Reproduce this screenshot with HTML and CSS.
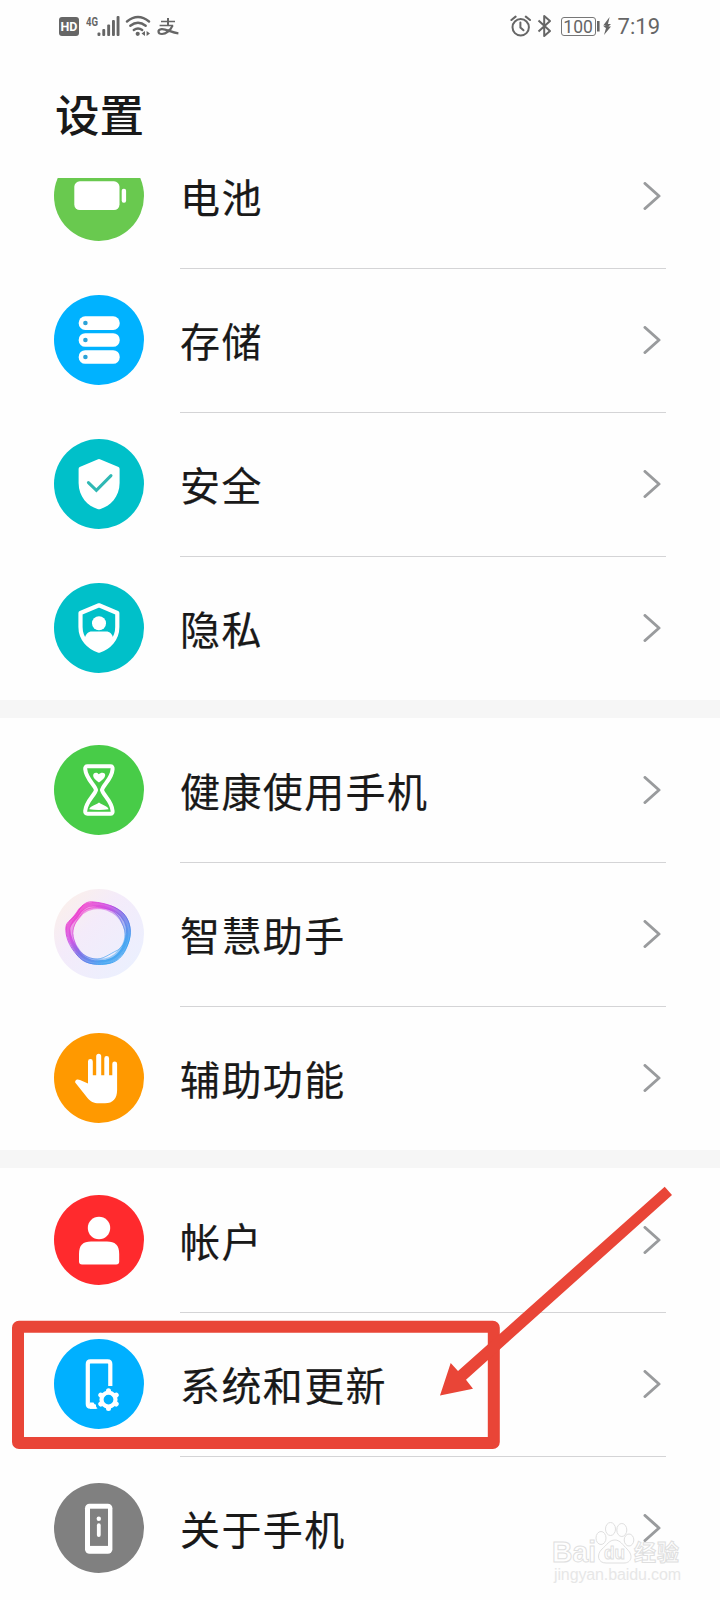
FILE: index.html
```
<!DOCTYPE html>
<html lang="zh-CN">
<head>
    <meta charset="UTF-8">
    <title>设置</title>
    <link rel="stylesheet" href="styles.css">
</head>
<body>
    <svg class="defs" width="0" height="0">
        <symbol id="chevron" viewBox="0 0 18 28">
            <path d="M2 1.5 L16 14 L2 26.5" fill="none" stroke="#999b9d" stroke-width="3" stroke-linecap="round" stroke-linejoin="round"/>
        </symbol>
    </svg>

    <header class="header">
        <div class="status">
            <div class="status-left">
                <span class="hd">HD</span>
                <svg width="52" height="24" viewBox="0 0 52 24" fill="#666">
                    <text x="0" y="11.5" class="net" textLength="12" lengthAdjust="spacingAndGlyphs">4G</text>
                    <rect x="11.5" y="18.5" width="2.9" height="3.5" rx="1"/>
                    <rect x="16.3" y="15" width="2.9" height="7" rx="1"/>
                    <rect x="21.2" y="10.5" width="2.9" height="11.5" rx="1"/>
                    <rect x="26" y="6" width="2.9" height="16" rx="1"/>
                    <rect x="30.6" y="2" width="2.9" height="20" rx="1"/>
                </svg>
                <svg width="26" height="24" viewBox="0 0 26 24" fill="none" stroke="#666" stroke-width="2.4" stroke-linecap="round">
                    <path d="M2 7.5 Q13 -1.5 24 7.5"/>
                    <path d="M5.3 11.8 Q13 5.6 20.7 11.8"/>
                    <path d="M8.8 16 Q13 12.8 17.2 16"/>
                    <circle cx="12.7" cy="19.8" r="2.1" fill="#666" stroke="none"/>
                    <path d="M20 17 V22 L16.5 19.4 Z M21.6 17 V22 L25 19.4 Z" fill="#666" stroke="none"/>
                </svg>
                <svg class="pay" width="22" height="20" viewBox="0 0 22 20" fill="none" stroke="#666" stroke-width="2">
                    <path d="M4 4.4 H18 M2.6 8.6 H16.2" stroke-width="1.5"/>
                    <path d="M11 1 V8.6"/>
                    <path d="M15.5 8.6 C13.5 13.5 9 17 5 17 C0.5 17 0.3 12.6 4.6 12.2 C9 11.8 14 15.4 21.4 16.4" stroke-width="2.2"/>
                </svg>
            </div>
            <div class="status-right">
                <svg width="22" height="24" viewBox="0 0 22 24" fill="none" stroke="#666" stroke-width="2" stroke-linecap="round">
                    <circle cx="10.7" cy="13.3" r="8.2"/>
                    <path d="M10.4 8.5 V13.5 L13.5 16.3"/>
                    <path d="M1.4 6 L5.6 2.6 M20 6 L15.8 2.6"/>
                </svg>
                <svg class="bt" width="15" height="24" viewBox="0 0 15 24" fill="none" stroke="#666" stroke-width="2" stroke-linejoin="round">
                    <path d="M1.5 6.5 L13 17 L7.2 22 V2 L13 7 L1.5 17.5"/>
                </svg>
                <span class="battery">100</span>
                <svg class="bolt" width="13" height="24" viewBox="0 0 13 24" fill="#666">
                    <rect x="0" y="7" width="2.6" height="10.5"/>
                    <path d="M12.6 3 L6.2 11.4 H9 L6.4 12.6 L9 14 L7 21 L14 12.6 H11.4 L14 10 H11 Z"/>
                </svg>
                <span class="time">7:19</span>
            </div>
        </div>
        <h1>设置</h1>
    </header>

    <main class="list">
        <section class="group group-scrolled">
            <div class="row">
                <svg class="icon" viewBox="0 0 90 90">
                    <circle cx="45" cy="45" r="45" fill="#69c94f"/>
                    <rect x="20.3" y="30.3" width="45.2" height="28.7" rx="5.5" fill="#fff"/>
                    <rect x="67.7" y="37.7" width="4.4" height="14" rx="2" fill="#fff"/>
                </svg>
                <div class="cell"><span>电池</span><svg class="arrow"><use href="#chevron"/></svg></div>
            </div>
            <div class="row">
                <svg class="icon" viewBox="0 0 90 90">
                    <circle cx="45" cy="45" r="45" fill="#00b2ff"/>
                    <g fill="#fff">
                        <rect x="24.7" y="21.3" width="41" height="13.6" rx="6.5"/>
                        <rect x="24.7" y="38.2" width="41" height="13.6" rx="6.5"/>
                        <rect x="24.7" y="55.2" width="41" height="13.6" rx="6.5"/>
                    </g>
                    <g fill="#2ba3d8">
                        <circle cx="31.4" cy="28" r="2.3"/>
                        <circle cx="31.4" cy="45" r="2.3"/>
                        <circle cx="31.4" cy="62" r="2.3"/>
                    </g>
                </svg>
                <div class="cell"><span>存储</span><svg class="arrow"><use href="#chevron"/></svg></div>
            </div>
            <div class="row">
                <svg class="icon" viewBox="0 0 90 90">
                    <circle cx="45" cy="45" r="45" fill="#00c0c9"/>
                    <path d="M43.5 20.5 Q45 19.7 46.5 20.5 L64.5 28 Q65.6 28.5 65.6 30 V44 C65.6 58 56 67 46.5 70 Q45 70.5 43.5 70 C34 67 24.6 58 24.6 44 V30 Q24.6 28.5 25.7 28 Z" fill="#fff"/>
                    <path d="M34.4 43.6 L42.4 51.4 L57 36.6" fill="none" stroke="#2fb8b4" stroke-width="3" stroke-linecap="round"/>
                </svg>
                <div class="cell"><span>安全</span><svg class="arrow"><use href="#chevron"/></svg></div>
            </div>
            <div class="row">
                <svg class="icon" viewBox="0 0 90 90">
                    <circle cx="45" cy="45" r="45" fill="#00c0c9"/>
                    <path d="M45 22.3 L63.3 30 V44 C63.3 56 55 64.5 45 67.7 C35 64.5 26.5 56 26.5 44 V30 Z" fill="none" stroke="#fff" stroke-width="4.2" stroke-linejoin="round"/>
                    <circle cx="45" cy="40.2" r="7" fill="#fff"/>
                    <path d="M30.5 56 C32 50.5 34 48.6 38 48.6 H52 C56 48.6 58 50.5 59.5 56 C56 62 51 66 45 68 C39 66 34 62 30.5 56 Z" fill="#fff"/>
                </svg>
                <div class="cell"><span>隐私</span><svg class="arrow"><use href="#chevron"/></svg></div>
            </div>
        </section>

        <section class="group">
            <div class="row">
                <svg class="icon" viewBox="0 0 90 90">
                    <circle cx="45" cy="45" r="45" fill="#48cc48"/>
                    <path d="M33.5 21.3 H56.5 Q58.8 21.3 58.6 24 C58 34 49 40 48 45 C49 50 58 56 58.6 66 Q58.8 68.8 56.5 68.8 H33.5 Q31 68.8 31.2 66 C32 56 41 50 42 45 C41 40 32 34 31.2 24 Q31 21.3 33.5 21.3 Z" fill="none" stroke="#fff" stroke-width="4"/>
                    <path d="M45 37.5 C42.5 35.5 38.8 33 39.2 30 C39.6 27.6 43 27 44.6 29.3 C46.5 27.4 51 26.8 51.2 30 C51.2 33 47.5 35.5 45 37.5 Z" fill="#fff"/>
                    <path d="M35.3 64.2 C35.8 60.8 41.5 60.2 45 57.4 C48.5 60.2 54 60.8 54.6 64.2 Q45 65.6 35.3 64.2 Z" fill="#fff"/>
                </svg>
                <div class="cell"><span>健康使用手机</span><svg class="arrow"><use href="#chevron"/></svg></div>
            </div>
            <div class="row">
                <svg class="icon" viewBox="0 0 90 90">
                    <defs>
                        <linearGradient id="halo" x1="0" y1="0" x2="1" y2="1">
                            <stop offset="0" stop-color="#fdf1e6"/>
                            <stop offset="0.4" stop-color="#f4ebfa"/>
                            <stop offset="1" stop-color="#e9f1ff"/>
                        </linearGradient>
                        <linearGradient id="ring" x1="0.15" y1="0.1" x2="0.8" y2="0.8">
                            <stop offset="0" stop-color="#f02cc6"/>
                            <stop offset="0.32" stop-color="#c93ee2"/>
                            <stop offset="0.6" stop-color="#6c60e4"/>
                            <stop offset="1" stop-color="#309cf0"/>
                        </linearGradient>
                    </defs>
                    <circle cx="45" cy="45" r="45" fill="url(#halo)"/>
                    <!-- лента из нескольких полупрозрачных контуров -->
                    <g fill="none" stroke="url(#ring)">
                        <path d="M23 26 C28 17 34 14 42 15.5 C52 17 62 19 68 26 C75 34 76 42 73 52 C69 64 62 71 52 73 C40 74.5 32 73 25 65 C18 56 14 48 14 40 C14 34 19 32 23 26 Z" stroke-width="4.5" opacity="0.75"/>
                        <path d="M25 27 C30 20 38 18 46 18 C56 19 65 25 69 33 C75 43 73 54 66 62 C59 71 48 73 38 71 C28 69 21 60 18 50 C15 41 18 34 25 27 Z" stroke-width="4" opacity="0.45"/>
                        <path d="M24 23 C29 14 34 12 40 13 C50 14 62 17 70 25 C77 33 78 45 74 55 C70 67 63 74 52 75 C40 76 30 75 23 66 C15 57 11 47 12 38 C12 32 20 30 24 23 Z" stroke-width="1" opacity="0.8"/>
                        <path d="M27 26 C31 19 38 18 47 19 C58 19 65 26 68 34 C73 44 73 55 64 61 C55 65 49 71 40 70 C30 68 23 62 20 51 C17 42 20 34 27 26 Z" stroke-width="1" opacity="0.6"/>
                    </g>
                </svg>
                <div class="cell"><span>智慧助手</span><svg class="arrow"><use href="#chevron"/></svg></div>
            </div>
            <div class="row">
                <svg class="icon" viewBox="0 0 90 90">
                    <circle cx="45" cy="45" r="45" fill="#ff9900"/>
                    <path d="M34 50.5 V28.5 A2.4 2.4 0 0 1 38.8 28.5 V42.3 H42.2 V23.2 A2.5 2.5 0 0 1 47.2 23.2 V42.3 H50.3 V25.5 A2.4 2.4 0 0 1 55.1 25.5 V42.3 H58.3 V30.8 A2.4 2.4 0 0 1 63.1 30.8 V57 C63.1 65.5 59 70.3 51 70.3 H45 C39.5 70.3 36.5 68.6 33.5 65 L21.8 50.3 C19.8 47.6 23 45.3 26 47 Z" fill="#fff"/>
                </svg>
                <div class="cell"><span>辅助功能</span><svg class="arrow"><use href="#chevron"/></svg></div>
            </div>
        </section>

        <section class="group">
            <div class="row">
                <svg class="icon" viewBox="0 0 90 90">
                    <circle cx="45" cy="45" r="45" fill="#ff2a2d"/>
                    <circle cx="45" cy="33" r="11.2" fill="#fff"/>
                    <path d="M25 59 C25 50 29 46.5 37 46.5 H53 C61 46.5 65.2 50 65.2 59 V66.5 Q65.2 69.4 62.2 69.4 H28 Q25 69.4 25 66.5 Z" fill="#fff"/>
                </svg>
                <div class="cell"><span>帐户</span><svg class="arrow"><use href="#chevron"/></svg></div>
            </div>
            <div class="row">
                <svg class="icon" viewBox="0 0 90 90">
                    <circle cx="45" cy="45" r="45" fill="#00b0ff"/>
                    <path d="M56.3 47 V25 Q56.3 22.4 53.7 22.4 H36.4 Q33.8 22.4 33.8 25 V65 Q33.8 67.7 36.4 67.7 H42" fill="none" stroke="#fff" stroke-width="4.2"/>
                    <path d="M36 63.5 H39.5 L43.5 69.8 H36 Z" fill="#fff"/>
                    <circle cx="54.5" cy="60.6" r="7" fill="none" stroke="#fff" stroke-width="4.2"/>
                    <g stroke="#fff" stroke-width="5" stroke-linecap="round">
                        <path d="M54.5 52.2 V51.8 M54.5 69 V69.4"/>
                        <path d="M47.2 56.4 L46.8 56.1 M61.8 64.8 L62.2 65.1"/>
                        <path d="M61.8 56.4 L62.2 56.1 M47.2 64.8 L46.8 65.1"/>
                    </g>
                </svg>
                <div class="cell"><span>系统和更新</span><svg class="arrow"><use href="#chevron"/></svg></div>
            </div>
            <div class="row">
                <svg class="icon" viewBox="0 0 90 90">
                    <circle cx="45" cy="45" r="45" fill="#808080"/>
                    <rect x="31" y="20.7" width="27.4" height="50" rx="4.5" fill="#fff"/>
                    <rect x="36" y="25.7" width="18" height="37.2" fill="#808080"/>
                    <circle cx="44.8" cy="35.8" r="2.2" fill="#fff"/>
                    <rect x="42.9" y="40.3" width="3.8" height="13.6" rx="1.9" fill="#fff"/>
                </svg>
                <div class="cell"><span>关于手机</span><svg class="arrow"><use href="#chevron"/></svg></div>
            </div>
        </section>
    </main>

    <!-- 标注：红框和箭头 -->
    <svg class="mark" width="720" height="300" viewBox="0 1170 720 300">
        <rect x="18" y="1326.7" width="475.8" height="116.4" rx="1" fill="none" stroke="#e94537" stroke-width="12" stroke-linejoin="round"/>
        <path d="M440 1395.5 L450.7 1363 L458 1371 L664.7 1186.7 L672 1195 L466 1379.7 L473 1388.7 Z" fill="#e94537"/>
    </svg>

    <svg class="watermark" width="140" height="72" viewBox="548 1516 140 72">
        <g fill="#fff" stroke="#d8d8d8" stroke-width="1">
            <ellipse cx="601" cy="1538" rx="5" ry="6.5"/>
            <ellipse cx="610.5" cy="1529" rx="5" ry="6.5"/>
            <ellipse cx="621.8" cy="1530" rx="5" ry="6.5"/>
            <ellipse cx="629" cy="1540" rx="4.8" ry="6"/>
            <path d="M615 1540 C620 1540 623 1545 627 1549 C634 1556 631 1563 624 1563 C618 1563 612 1563 606 1563 C598 1563 596 1555 602 1549 C607 1545 609 1540 615 1540 Z"/>
            <text x="552" y="1562" class="wm-big" textLength="44" lengthAdjust="spacingAndGlyphs">Bai</text>
            <text x="604" y="1559" class="wm-du" textLength="21" lengthAdjust="spacingAndGlyphs">du</text>
            <text x="634" y="1560" class="wm-cn" textLength="45">经验</text>
        </g>
        <text x="554" y="1580" class="wm-url" textLength="127">jingyan.baidu.com</text>
    </svg>
</body>
</html>
```
FILE: styles.css
```
body {
    margin: 0;
    width: 720px;
    height: 1600px;
    position: relative;
    overflow: hidden;
    background-color: #fefefe;
    color: #191919;
    font-family: "Noto Sans CJK SC", sans-serif;
}

svg {
    display: block;
    flex-shrink: 0;
}

.defs {
    position: absolute;
}

/* шапка */
.header {
    height: 178px;
    box-sizing: border-box;
    padding: 14px 60px 0 55px;
}

.status {
    display: flex;
    justify-content: space-between;
    height: 26px;
    color: #666;
    font-family: Roboto, sans-serif;
}

.status-left,
.status-right {
    display: flex;
    align-items: flex-start;
}

.hd {
    width: 20px;
    height: 19px;
    margin: 3px 7px 0 4px;
    border-radius: 3px;
    background-color: #666;
    color: #fff;
    font-size: 12.5px;
    font-weight: bold;
    line-height: 20px;
    text-align: center;
}

.net {
    font-size: 13px;
    font-weight: bold;
}

.status-left svg + svg {
    margin-left: -13px;
}

.status-left .pay.pay {
    margin: 3px 0 0 6px;
}

.bt {
    margin-left: 5px;
}

.battery {
    width: 35px;
    height: 19px;
    box-sizing: border-box;
    margin: 3px 1px 0 9px;
    border: 1px solid #777;
    border-radius: 3px;
    font-size: 17.5px;
    line-height: 18px;
    text-align: center;
}

.bolt {
    overflow: visible;
    margin-right: 8px;
}

.time {
    font-size: 22px;
    line-height: 26px;
}

h1 {
    margin: 38px 0 0;
    font-size: 44.5px;
    font-weight: 500;
    line-height: 70px;
}

/* список настроек */
.list {
    height: 1422px;
    overflow: hidden;
}

.group + .group {
    border-top: 18px solid #f6f6f6;
}

.group-scrolled {
    margin-top: -54px;
}

.row {
    display: flex;
    align-items: center;
    height: 144px;
    padding: 0 54px;
}

.icon {
    width: 90px;
    height: 90px;
    margin-right: 36px;
}

.cell {
    flex: 1;
    display: flex;
    align-items: center;
    justify-content: space-between;
    height: 144px;
    box-sizing: border-box;
    border-top: 1px solid transparent;
    padding: 0 5px 1px 0;
    font-size: 40px;
    line-height: 42px;
    letter-spacing: 1.4px;
    -webkit-text-stroke: 0.2px #191919;
}

.row + .row .cell {
    border-top-color: #d4d4d6;
}

.arrow {
    width: 18px;
    height: 28px;
}

.mark {
    position: absolute;
    left: 0;
    top: 1170px;
}

.watermark {
    position: absolute;
    left: 548px;
    top: 1516px;
    opacity: 0.8;
    font-family: "Liberation Sans", "Noto Sans CJK SC", sans-serif;
}

.wm-big {
    font-size: 29px;
    font-weight: bold;
}

.wm-du {
    font-size: 19px;
    font-weight: bold;
}

.wm-cn {
    font-size: 22px;
    font-weight: bold;
}

.wm-url {
    font-size: 16px;
    fill: #e2e2e2;
}
```
